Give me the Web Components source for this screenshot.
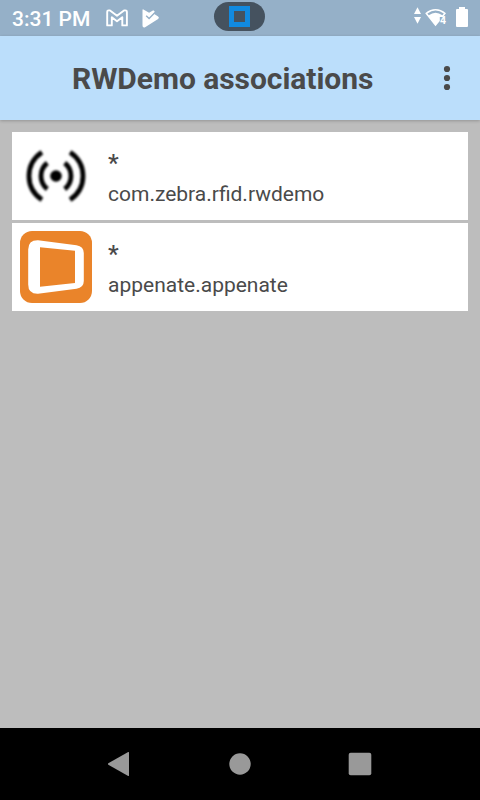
<!DOCTYPE html>
<html lang="en">
<head>
<meta charset="utf-8">
<title>RWDemo associations</title>
<style>
html, body { margin: 0; width: 480px; height: 800px; overflow: hidden; }
body { font-family: Roboto, "Noto Sans", sans-serif; color: #4a4a4a; background: #bdbdbd; }
</style>
</head>
<body>
<phone-screen>
  <status-bar slot="status" time="3:31 PM"></status-bar>
  <app-bar slot="header">RWDemo associations</app-bar>
  <association-row><signal-icon slot="icon"></signal-icon><span slot="title">*</span>com.zebra.rfid.rwdemo</association-row>
  <association-row><appenate-icon slot="icon"></appenate-icon><span slot="title">*</span>appenate.appenate</association-row>
  <nav-bar slot="nav"></nav-bar>
</phone-screen>
<script>
const define = (name, html) => customElements.define(name, class extends HTMLElement {
  constructor() {
    super();
    this.attachShadow({ mode: 'open' }).innerHTML = html;
  }
  connectedCallback() {
    const time = this.shadowRoot.querySelector('.time');
    if (time) time.textContent = this.getAttribute('time');
  }
});

define('status-bar', `
<style>
:host { display: grid; grid-template-columns: 214px 51px 1fr; height: 36px; background: #95b0c8; color: #fff; }
.left { display: flex; padding-left: 12px; }
.time { font-size: 21px; font-weight: 500; line-height: 38px; width: 94px; white-space: nowrap; }
.pill { margin-top: 2px; height: 29px; border-radius: 15px; background: #45525f; display: flex; justify-content: center; }
.pill i { box-sizing: border-box; width: 21px; height: 21px; margin: 4px 0 0 0; border: 5px solid #118ae0; }
svg { display: block; }
.right { display: flex; justify-content: flex-end; }
</style>
<div class="left"><span class="time"></span>
<svg width="56" height="36" viewBox="106 0 56 36">
  <path d="M107.2 11.8Q107.2 10.4 108.6 10.4H110L117 15.7L124 10.4H125.5Q126.9 10.4 126.9 11.8V25.4H122.3V17.3L117 21.2L111.8 17.3V25.4H107.2Z" fill="none" stroke="#fff" stroke-width="1.9" stroke-linejoin="round"/>
  <path d="M143.4 9.4L149.1 12.8L153.3 10.2L155 12.1L153.5 13.4L158.1 16.6Q159.8 17.7 158.1 18.9L145.1 27.2Q142.5 28 142.5 25.4V10.2Q142.5 9 143.4 9.4Z" fill="#fff"/>
  <path d="M146.2 15.7L149.1 18.5L155 12.6" fill="none" stroke="#95b0c8" stroke-width="1.4"/>
</svg></div>
<div class="pill"><i></i></div>
<div class="right">
<svg width="75" height="36" viewBox="405 0 75 36" fill="#fff">
  <path d="M417.5 7.2L421 14H414ZM414 17H421L417.5 23.8Z"/>
  <path fill-rule="evenodd" d="M425.2 13.2Q435.5 4.8 446 13.2L443 17H439.8V21L435.5 26.2ZM427.4 13.6L428.8 15.2Q435.5 10.2 442.4 15.2L443.8 13.6Q435.5 7.4 427.4 13.6Z"/>
  <text x="440" y="24.2" font-size="10.5" font-weight="700">4</text>
  <path d="M459 7H465V9H467Q468 9 468 10V26Q468 27 467 27H457Q456 27 456 26V10Q456 9 457 9H459Z"/>
</svg></div>`);

define('app-bar', `
<style>
:host { display: flex; align-items: center; height: 84px; box-sizing: border-box; padding-left: 72px; background: #bbdefb; box-shadow: 0 1px 3px rgba(0,0,0,.22); }
h1 { flex: 1; margin: 0; font-size: 30px; line-height: 40px; font-weight: 700; letter-spacing: -.05px; padding-top: 1px; white-space: nowrap; }
svg { display: block; margin-right: 24px; }
</style>
<h1><slot></slot></h1>
<svg width="18" height="28" viewBox="0 0 18 28" fill="#4a4a4a"><circle cx="9" cy="5" r="3.1"/><circle cx="9" cy="14" r="3.1"/><circle cx="9" cy="23" r="3.1"/></svg>`);

define('association-row', `
<style>
:host { display: flex; align-items: center; height: 88px; box-sizing: border-box; padding: 0 8px; gap: 16px; background: #fff; }
.text { display: flex; flex-direction: column; font-size: 21px; line-height: 28px; padding-top: 3px; }
.title { font-size: 24px; font-weight: 500; line-height: 33px; }
</style>
<slot name="icon"></slot>
<div class="text"><div class="title"><slot name="title"></slot></div><div><slot></slot></div></div>`);

define('signal-icon', `
<style>:host, svg { display: block; width: 72px; height: 72px; } svg { filter: blur(.9px); }</style>
<svg viewBox="0 0 72 72" fill="none" stroke="#000" stroke-width="4.8">
  <circle cx="36" cy="36" r="5.8" fill="#000" stroke="none"/>
  <path d="M21.9 12.2Q9 21 9 36T21.9 59.8M27.3 23Q21 27.8 21 36T27.3 49M50.1 12.2Q63 21 63 36T50.1 59.8M44.7 23Q51 27.8 51 36T44.7 49"/>
</svg>`);

define('appenate-icon', `
<style>:host, svg { display: block; width: 72px; height: 72px; }</style>
<svg viewBox="0 0 72 72">
  <rect width="72" height="72" rx="12" fill="#ea842a"/>
  <path fill="#fff" fill-rule="evenodd" d="M18 9.2L56.5 14.2Q63.8 15.5 63.8 22V50Q63.8 56.5 56.5 57.7L18 62.7Q8.2 63 8.2 53.5V18.5Q8.2 9 18 9.2ZM20 16.2V55.7L55 51.9V19.7Z"/>
</svg>`);

define('nav-bar', `
<style>
:host { display: flex; align-items: center; justify-content: center; height: 72px; gap: 96px; background: #000; }
svg { display: block; width: 24px; height: 24px; fill: #999; }
</style>
<svg viewBox="0 0 24 24"><path d="M20.2 0Q21 -.2 21 .8V23.2Q21 24.2 20.2 24L.3 12.7Q-.5 12 .3 11.3Z"/></svg>
<svg viewBox="0 0 24 24"><circle cx="12" cy="12" r="10.7"/></svg>
<svg viewBox="0 0 24 24"><rect x=".7" y=".7" width="22.6" height="22.6" rx="2"/></svg>`);

define('phone-screen', `
<style>
:host { display: flex; flex-direction: column; width: 480px; height: 800px; background: #bdbdbd; }
main { flex: 1; display: flex; flex-direction: column; gap: 3px; padding: 12px; }
</style>
<slot name="status"></slot><slot name="header"></slot><main><slot></slot></main><slot name="nav"></slot>`);
</script>
</body>
</html>
